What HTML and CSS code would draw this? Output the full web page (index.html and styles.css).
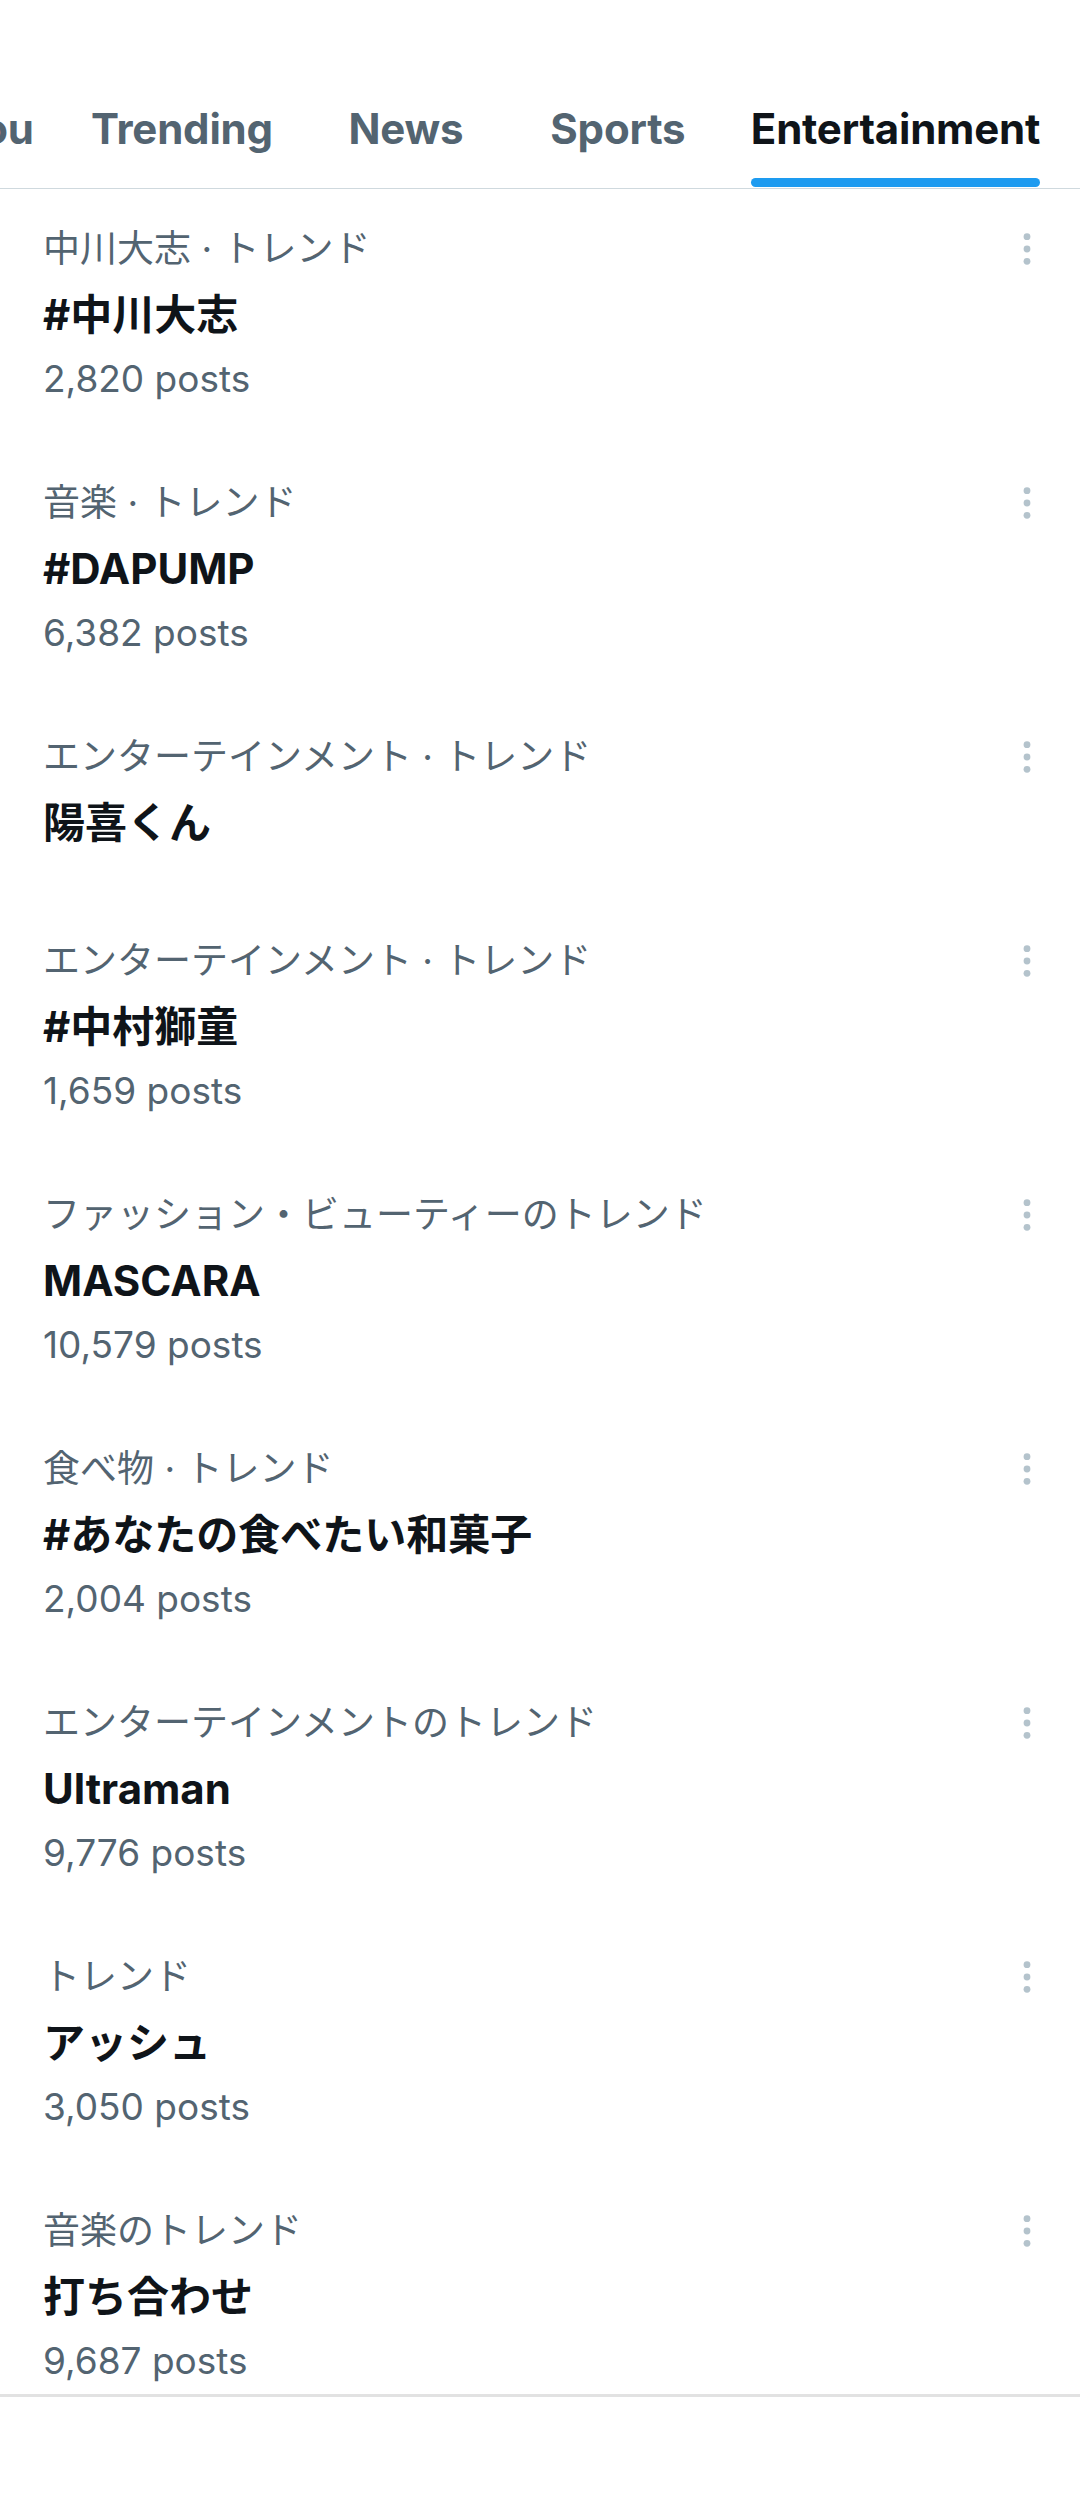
FILE: index.html
```html
<!DOCTYPE html>
<html lang="ja">
<head>
<meta charset="utf-8">
<title>Explore - Entertainment</title>
<link rel="stylesheet" href="styles.css">
</head>
<body>
<div class="page">
  <header class="tabs-bar">
    <nav class="tabs">
      <div class="tab"><span class="tab-label">For you<span class="tab-ind"></span></span></div>
      <div class="tab"><span class="tab-label">Trending<span class="tab-ind"></span></span></div>
      <div class="tab"><span class="tab-label">News<span class="tab-ind"></span></span></div>
      <div class="tab"><span class="tab-label">Sports<span class="tab-ind"></span></span></div>
      <div class="tab tab--active"><span class="tab-label">Entertainment<span class="tab-ind"></span></span></div>
    </nav>
  </header>

  <ul class="trends">
    <li class="trend">
      <div class="trend-body">
        <div class="trend-cat">中川大志 · トレンド</div>
        <div class="trend-title">#中川大志</div>
        <div class="trend-count">2,820 posts</div>
      </div>
      <div class="more"><svg viewBox="0 0 40 50" width="40" height="50"><circle cx="20" cy="12.7" r="3.4"/><circle cx="20" cy="25" r="3.4"/><circle cx="20" cy="37.3" r="3.4"/></svg></div>
    </li>
    <li class="trend">
      <div class="trend-body">
        <div class="trend-cat">音楽 · トレンド</div>
        <div class="trend-title">#DAPUMP</div>
        <div class="trend-count">6,382 posts</div>
      </div>
      <div class="more"><svg viewBox="0 0 40 50" width="40" height="50"><circle cx="20" cy="12.7" r="3.4"/><circle cx="20" cy="25" r="3.4"/><circle cx="20" cy="37.3" r="3.4"/></svg></div>
    </li>
    <li class="trend">
      <div class="trend-body">
        <div class="trend-cat">エンターテインメント · トレンド</div>
        <div class="trend-title">陽喜くん</div>
      </div>
      <div class="more"><svg viewBox="0 0 40 50" width="40" height="50"><circle cx="20" cy="12.7" r="3.4"/><circle cx="20" cy="25" r="3.4"/><circle cx="20" cy="37.3" r="3.4"/></svg></div>
    </li>
    <li class="trend">
      <div class="trend-body">
        <div class="trend-cat">エンターテインメント · トレンド</div>
        <div class="trend-title">#中村獅童</div>
        <div class="trend-count">1,659 posts</div>
      </div>
      <div class="more"><svg viewBox="0 0 40 50" width="40" height="50"><circle cx="20" cy="12.7" r="3.4"/><circle cx="20" cy="25" r="3.4"/><circle cx="20" cy="37.3" r="3.4"/></svg></div>
    </li>
    <li class="trend">
      <div class="trend-body">
        <div class="trend-cat">ファッション・ビューティーのトレンド</div>
        <div class="trend-title">MASCARA</div>
        <div class="trend-count">10,579 posts</div>
      </div>
      <div class="more"><svg viewBox="0 0 40 50" width="40" height="50"><circle cx="20" cy="12.7" r="3.4"/><circle cx="20" cy="25" r="3.4"/><circle cx="20" cy="37.3" r="3.4"/></svg></div>
    </li>
    <li class="trend">
      <div class="trend-body">
        <div class="trend-cat">食べ物 · トレンド</div>
        <div class="trend-title">#あなたの食べたい和菓子</div>
        <div class="trend-count">2,004 posts</div>
      </div>
      <div class="more"><svg viewBox="0 0 40 50" width="40" height="50"><circle cx="20" cy="12.7" r="3.4"/><circle cx="20" cy="25" r="3.4"/><circle cx="20" cy="37.3" r="3.4"/></svg></div>
    </li>
    <li class="trend">
      <div class="trend-body">
        <div class="trend-cat">エンターテインメントのトレンド</div>
        <div class="trend-title">Ultraman</div>
        <div class="trend-count">9,776 posts</div>
      </div>
      <div class="more"><svg viewBox="0 0 40 50" width="40" height="50"><circle cx="20" cy="12.7" r="3.4"/><circle cx="20" cy="25" r="3.4"/><circle cx="20" cy="37.3" r="3.4"/></svg></div>
    </li>
    <li class="trend">
      <div class="trend-body">
        <div class="trend-cat">トレンド</div>
        <div class="trend-title">アッシュ</div>
        <div class="trend-count">3,050 posts</div>
      </div>
      <div class="more"><svg viewBox="0 0 40 50" width="40" height="50"><circle cx="20" cy="12.7" r="3.4"/><circle cx="20" cy="25" r="3.4"/><circle cx="20" cy="37.3" r="3.4"/></svg></div>
    </li>
    <li class="trend">
      <div class="trend-body">
        <div class="trend-cat">音楽のトレンド</div>
        <div class="trend-title">打ち合わせ</div>
        <div class="trend-count">9,687 posts</div>
      </div>
      <div class="more"><svg viewBox="0 0 40 50" width="40" height="50"><circle cx="20" cy="12.7" r="3.4"/><circle cx="20" cy="25" r="3.4"/><circle cx="20" cy="37.3" r="3.4"/></svg></div>
    </li>
  </ul>
</div>
</body>
</html>
```

FILE: styles.css
```css
* {
  box-sizing: border-box;
}

html, body {
  margin: 0;
  padding: 0;
  background: #ffffff;
}

body {
  width: 1080px;
  overflow-x: hidden;
  font-family: Inter, "Noto Sans CJK JP", sans-serif;
  color: #0f1419;
}

.page {
  width: 1080px;
}

/* ---------- Tabs ---------- */
.tabs-bar {
  border-bottom: 1px solid #cfd9de;
  overflow: hidden;
}

.tabs {
  display: flex;
  margin-left: -148px;
  padding-top: 103px;
}

.tab {
  flex: none;
  min-width: 212px;
  padding: 0 27px;
  display: flex;
  justify-content: center;
  font-size: 42px;
  font-weight: 700;
  color: #536471;
  letter-spacing: -0.2px;
}

.tab-label {
  display: inline-flex;
  flex-direction: column;
  line-height: 52px;
  white-space: nowrap;
}

.tab-ind {
  display: block;
  height: 9px;
  margin-top: 23px;
  margin-bottom: 1px;
  border-radius: 5px;
  background: transparent;
}

.tab--active {
  color: #0f1419;
}

.tab--active .tab-ind {
  background: #1d9bf0;
}

/* ---------- Trends ---------- */
.trends {
  list-style: none;
  margin: 0;
  padding: 0;
  border-bottom: 3px solid #e2e2e2;
}

.trend {
  display: flex;
  align-items: flex-start;
  padding: 66px 0 12px 43px;
}

.trend:first-child {
  padding-top: 35px;
}

.trend-body {
  flex: 1;
  min-width: 0;
}

.trend-cat {
  font-size: 37px;
  line-height: 50px;
  color: #536471;
  white-space: nowrap;
}

.trend-title {
  margin-top: 6px;
  font-size: 42px;
  line-height: 70px;
  font-weight: 700;
  color: #0f1419;
  white-space: nowrap;
}

.trend-count {
  margin-top: 8px;
  font-size: 37px;
  line-height: 42px;
  color: #536471;
  white-space: nowrap;
}

.more {
  flex: none;
  width: 40px;
  height: 50px;
  margin-right: 33px;
}

.more svg {
  display: block;
  fill: #b4c3cc;
}
```
